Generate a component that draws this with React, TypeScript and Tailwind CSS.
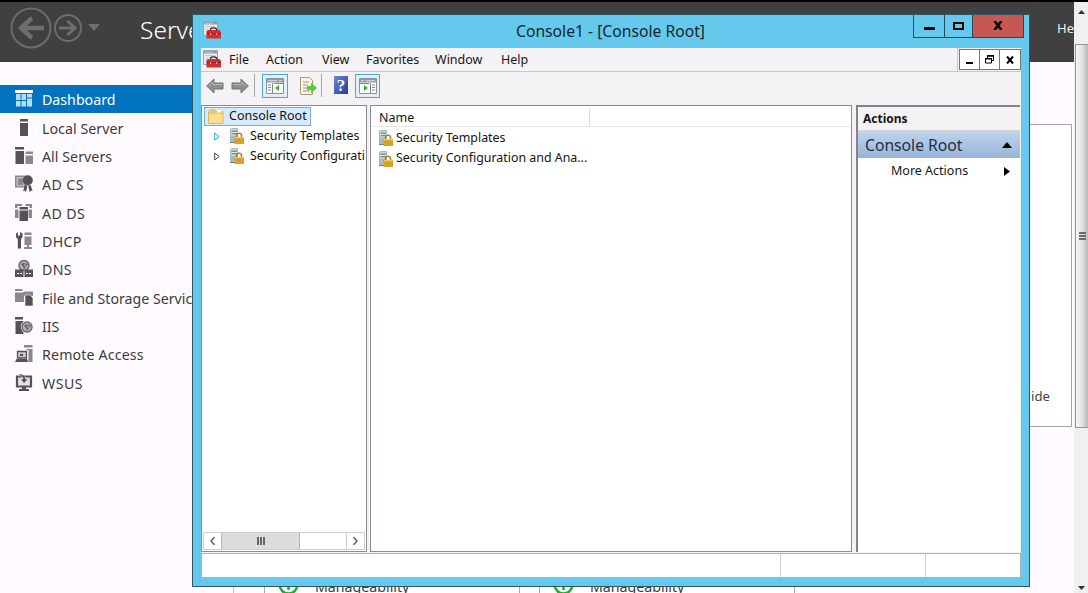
import type { ReactNode } from "react";

const Svg = ({ children, className = "size-[18px]", box = "0 0 18 18" }: { children: ReactNode; className?: string; box?: string }) => (
    <svg viewBox={box} className={`shrink-0 ${className}`} fill="none">
        {children}
    </svg>
);

const DARK = "#555257";
const MID = "#8b888d";

const Globe = ({ cx, cy, r }: { cx: number; cy: number; r: number }) => (
    <g>
        <circle cx={cx} cy={cy} r={r} fill="#b5b3b7" stroke="#6a676c" strokeWidth="1.4" />
        <path d={`M${cx - 3} ${cy - 1}l2-2 2 1-1 2 2 1-2 3-1-3zM${cx + 1} ${cy - 3}l3 2-2 2z`} fill="#6a676c" />
    </g>
);

const sidebar = [
    {
        label: "Dashboard",
        spacing: "tracking-normal",
        icon: <><path d="M0 0h18v3H0z" fill="#fff" /><path d="M1 4h4.500v6H1zM6.500 4H11v6H6.500zM12 4h5v3.500h-5zM1 11h4.500v5.500H1zM6.500 11H11v5.500H6.500zM12 8.500h5v8h-5z" fill="#b9dcf6" /></>,
    },
    {
        label: "Local Server",
        spacing: "tracking-[0.05px]",
        icon: <path d="M5 0h8v2.500H5zM5 4h8v13H5z" fill={DARK} />,
    },
    {
        label: "All Servers",
        spacing: "tracking-[0.05px]",
        icon: <><path d="M0 0h9v2.500H0zM.500 4H9v13H.500z" fill={DARK} /><path d="M10.500 4.500H18V7h-7.500zM10.500 8.500H18V17h-7.500z" fill={MID} /></>,
    },
    {
        label: "AD CS",
        spacing: "tracking-[0.4px]",
        icon: <><path d="M.7 1.200h9v10.500h-9z" fill="#bdbbc0" stroke={MID} strokeWidth="1.400" /><path d="M3 3.500h5V10H3z" fill={MID} /><circle cx="12.800" cy="5.200" r="5" fill={DARK} /><path d="M10 10l2.500.5-1.500 6.500-1.500-1.500-1.500.5zM15.600 10l-2.500.5 1.500 6.500 1.500-1.500 1.500.5z" fill={DARK} /></>,
    },
    {
        label: "AD DS",
        spacing: "tracking-[0.4px]",
        icon: <><path d="M0 0h7v2H2.500v2H0zM10.500 0H17v4h-2.500V2h-4zM0 5.500h3.500V14H0zM13.500 5.500H17V14h-3.500z" fill={MID} /><path d="M4.500 3h8.500v2.500H4.500zM4.500 6.500H13V17H4.500z" fill={DARK} /></>,
    },
    {
        label: "DHCP",
        spacing: "tracking-[0.3px]",
        icon: <><path d="M2.800 0v3.500h2.200V0L7.500 1.500v3.700L6 7v9.500H2.800V7L1 5.200V1.500z" fill={DARK} /><path d="M9.500.5h7V3h-7zM9.500 4.500h7V13h-7zM12 13h2v2h3v2h-8v-2h3z" fill={MID} /></>,
    },
    {
        label: "DNS",
        spacing: "tracking-[0.3px]",
        icon: <><Globe cx={9} cy={5.500} r={5} /><path d="M0 9.500h8.500V17H0zM9.500 9.500H18V17H9.500z" fill={DARK} /><path d="M2 13h2v1H2zM5 13h2v1H5zM11 13h2v1h-2zM14 13h2v1h-2z" fill="#fff" /></>,
    },
    {
        label: "File and Storage Services",
        spacing: "tracking-normal",
        icon: <><path d="M0 0h7.500v2H0zM0 3.500h9V13H0zM8.500 2.500H18V7H8.500z" fill={MID} /><path d="M10 6h5l3 3v8h-8z" fill={DARK} stroke="#fff" strokeWidth=".6" /></>,
    },
    {
        label: "IIS",
        spacing: "tracking-normal",
        icon: <><path d="M0 0h8v2.500H0zM.500 4h8v13h-8z" fill={DARK} /><circle cx="12" cy="10" r="6.200" fill="#fefaff" /><Globe cx={12} cy={10} r={5} /></>,
    },
    {
        label: "Remote Access",
        spacing: "tracking-[0.15px]",
        icon: <><path d="M9 0h8.500v2.500H9zM11.500 4h6v13h-4V5H11z" fill={MID} /><path d="M2.500 6.500h9V13h-9z" fill="#c9c7cb" stroke={DARK} strokeWidth="1.300" /><path d="M1.500 14h10.500l1.500 3H0z" fill={DARK} /><path d="M5 11V9h3v2z" fill={DARK} /></>,
    },
    {
        label: "WSUS",
        spacing: "tracking-[0.5px]",
        icon: <><path d="M2 2.500h14v10H2z" fill="#e4e1e5" stroke={DARK} strokeWidth="2.200" /><path d="M7 13h4v2h3v2H4v-2h3z" fill={DARK} /><path d="M4 0c5 0 6.500 2.500 6.500 5H13L9 9.500 5.500 5H8C8 3 6.500 1.500 4 1.500z" fill={DARK} stroke="#fefaff" strokeWidth=".5" /></>,
    },
];

const Toolbox = () => (
    <Svg>
        <path d="M.5.500h14v14H.5z" fill="#e9edee" stroke="#9aa5aa" />
        <path d="M1 1h13v2.500H1z" fill="#8f9ca1" />
        <path d="M2 2.200h8M2 5.500h10M2 8h3M2 10.500h2" stroke="#c3ccd0" />
        <path d="M7.500 9.500V7.800c1-1.200 5-1.200 6 0v1.700" stroke="#2b2527" strokeWidth="1.300" />
        <path d="M4.500 9h12L18 11v6.500H3.500V11z" fill="#d02f2d" />
        <path d="M3.500 12.500H18" stroke="#96201f" />
        <path d="M7 12h1.200v2H7zM13 12h1.200v2H13z" fill="#e9a698" />
    </Svg>
);

const ServerLock = () => (
    <Svg className="size-[16px]" box="0 0 16 16">
        <path d="M1 1l2-1h6v15H1z" fill="#a9b9c0" />
        <path d="M2 2h6M2 4.500h6M2 7h5" stroke="#e2eaec" />
        <path d="M3 3.200h5M3 5.700h5M1 14.500h6" stroke="#657984" strokeWidth=".9" />
        <path d="M7.500 10V7.500c0-3 5-3 5 0V10" stroke="#a8822d" strokeWidth="1.600" />
        <path d="M5.500 9H15v7H5.500z" fill="#d6a326" />
        <path d="M6 9.700h8.500" stroke="#f5d879" />
        <path d="M10 11.500V13" stroke="#b58a22" />
    </Svg>
);

const Folder = () => (
    <Svg className="size-[16px]" box="0 0 16 16">
        <path d="M.5 2.500L2 1h5l1 1.500h7v12H.5z" fill="#edc867" stroke="#dcb762" />
        <path d="M1 5h13.500v9H1z" fill="#f8df8f" />
        <path d="M9 1.500h4.500v2H9z" fill="#fff" />
    </Svg>
);

const Arrow = ({ flip = false }: { flip?: boolean }) => (
    <Svg className={flip ? "h-4 w-[18px] -scale-x-100" : "h-4 w-[18px]"} box="0 0 18 16">
        <path d="M.7 8L8 1v4h9v6H8v4z" fill="#8f8f8f" stroke="#727272" />
        <path d="M3 8l4-4v2.500h9" stroke="#b5b5b5" />
    </Svg>
);

const PaneIcon = ({ flip = false }: { flip?: boolean }) => (
    <Svg className={flip ? "h-[16px] w-[18px] -scale-x-100" : "h-[16px] w-[18px]"} box="0 1 18 16">
        <path d="M.5 1.500h17v15H.5z" fill="#fff" stroke="#8b9196" />
        <path d="M1 2h16v3.500H1z" fill="#929ba3" />
        <path d="M2 3.700h9M13 3.700h3" stroke="#dce1e5" />
        <path d="M6.500 6v10M2 8h3M2 10.500h3M2 13h3M8 6.500h9" stroke="#7f878f" />
        <path d="M13 8v6l-4-3z" fill="#3fae29" />
    </Svg>
);

const menu = [
    { label: "File", cell: "w-[37px]" },
    { label: "Action", cell: "w-[56px]" },
    { label: "View", cell: "w-[44px]" },
    { label: "Favorites", cell: "w-[69px]" },
    { label: "Window", cell: "w-[66px]" },
    { label: "Help", cell: "w-[40px]" },
];

const Sidebar = () => (
    <div className="w-[233px] shrink-0 pt-[22.700px]">
        {sidebar.map(({ label, icon, spacing }, i) => (
            <div
                key={label}
                className={`flex h-[28.350px] items-center gap-[9px] pl-[15px] text-[14.200px] whitespace-nowrap ${spacing} ${i === 0 ? "bg-[#0072c0] text-white" : "text-[#3d3a40]"}`}
            >
                <Svg className="mt-px size-[18px]">{icon}</Svg>
                <span className="mt-[2px]">{label}</span>
            </div>
        ))}
    </div>
);

const Tile = () => (
    <div className="flex h-full w-[256px] items-end gap-[16px] overflow-hidden border-x border-[#aaa6ab] bg-white pl-[13px]">
        <Svg className="mb-[-2px] size-[21px]" box="0 0 21 21">
            <circle cx="10.500" cy="10.500" r="9" stroke="#16b526" strokeWidth="2.500" />
            <path d="M10.500 16V6M6.500 10l4-4 4 4" stroke="#16b526" strokeWidth="2.500" />
        </Svg>
        <span className="mb-[-4px] text-[14.200px] leading-[20px] text-[#3d3a40]">Manageability</span>
    </div>
);

const ServerManager = () => (
    <div className="flex h-full w-full bg-[#fefaff]">
        <div className="flex min-w-0 flex-1 flex-col">
            <div className="flex h-[60px] shrink-0 justify-between bg-[#404040]">
                <div className="flex items-start pl-[10px]">
                    <Svg className="mt-[5px] size-[42px]" box="0 0 42 42">
                        <circle cx="21" cy="21" r="19.500" stroke="#6c6c6c" strokeWidth="2" />
                        <path d="M34 21H11M22 11L11 21l11 10" stroke="#6e6e6e" strokeWidth="4.500" />
                    </Svg>
                    <Svg className="mt-[11px] ml-[1px] size-[30px]" box="0 0 30 30">
                        <circle cx="15" cy="15" r="13" stroke="#6c6c6c" strokeWidth="2" />
                        <path d="M6 15h16M14.500 8l7.500 7-7.500 7" stroke="#6e6e6e" strokeWidth="3" />
                    </Svg>
                    <Svg className="mt-[22px] ml-[5px] h-[8px] w-[12px]" box="0 0 12 8">
                        <path d="M0 0h12L6 7z" fill="#6e6e6e" />
                    </Svg>
                    <span className="mt-[11px] ml-[40px] text-[24.500px] leading-[34px] font-light text-white">Server Manager</span>
                </div>
                <span className="mt-[16px] w-[17px] overflow-hidden text-[13px] leading-[20px] text-[#eee]">Help</span>
            </div>
            <div className="flex min-h-0 flex-1">
                <Sidebar />
                <div className="flex flex-1 flex-col border-l border-[#c4c0c6] pt-[62px]">
                    <div className="mr-[2px] flex h-[303px] items-end justify-end border border-[#aaa0a8] bg-white pr-[21px] pb-[20px]">
                        <span className="text-[13.200px] leading-[20px] text-[#444]">Hide</span>
                    </div>
                    <div className="flex flex-1 items-end gap-[19px] pl-[30px]">
                        <div className="h-[80px]"><Tile /></div>
                        <div className="h-[80px]"><Tile /></div>
                    </div>
                </div>
            </div>
        </div>
        <div className="flex w-[14px] shrink-0 flex-col items-center bg-[#f0f0f0]">
            <Svg className="mt-[8px] h-[4px] w-[7px]" box="0 0 7 4"><path d="M0 4l3.500-4L7 4z" fill="#333" /></Svg>
            <div className="mt-[30px] ml-px flex h-[384px] w-[13px] items-center justify-center border border-r-0 border-[#949297] bg-linear-to-r from-[#f7f7f8] via-[#e3e3e5] to-[#b9b9bd]">
                <Svg className="h-[9px] w-[7px]" box="0 0 7 9"><path d="M0 1h7M0 4h7M0 7h7" stroke="#444" strokeWidth="1.500" /></Svg>
            </div>
            <Svg className="mt-auto mb-[3px] h-[4px] w-[7px]" box="0 0 7 4"><path d="M0 0l3.500 4L7 0z" fill="#333" /></Svg>
        </div>
    </div>
);

const TitleBar = () => (
    <div className="flex h-[33px] shrink-0 items-start">
        <div className="mt-[6px] ml-[10px] w-[112px]"><Toolbox /></div>
        <div className="mt-[4px] flex-1 pl-[201px] text-[15.700px] leading-[24px] whitespace-nowrap text-[#14262d]">Console1 - [Console Root]</div>
        <div className="mr-[5px] flex h-[23px] border border-t-0 border-[#244b59]">
            <div className="flex w-[31px] justify-center border-r border-[#244b59]"><div className="mt-[12px] h-[3px] w-[11px] bg-black" /></div>
            <div className="flex w-[28px] justify-center border-r border-[#244b59]"><div className="mt-[7px] h-[8px] w-[11px] border-2 border-black" /></div>
            <div className="flex w-[50px] justify-center bg-[#c65853]">
                <Svg className="mt-[6px] h-[9px] w-[10px]" box="0 0 10 9"><path d="M1.500 0l7 9M8.500 0l-7 9" stroke="#000" strokeWidth="2.500" /></Svg>
            </div>
        </div>
    </div>
);

const MenuBar = () => (
    <div className="flex h-[24px] shrink-0 border-b border-[#c9c6ca] bg-[#f5f2f6] text-[12.500px]">
        <div className="mt-[2px] ml-[2px] w-[26px]"><Toolbox /></div>
        <div className="flex flex-1 leading-[23px]">
            {menu.map(({ label, cell }) => <span key={label} className={`${cell} shrink-0 whitespace-nowrap`}>{label}</span>)}
        </div>
        <div className="flex h-[24px] items-start border-l border-[#c9c6ca] pt-px pl-px">
            <div className="flex h-[21px] w-[21px] items-center justify-center border border-[#77747a] bg-white"><div className="mt-[7px] h-[2px] w-[7px] bg-black" /></div>
            <div className="flex h-[21px] w-[20px] items-center justify-center border border-l-0 border-[#77747a] bg-white">
                <Svg className="h-[9px] w-[9px]" box="0 0 9 9"><path d="M2.500 3V1H8.500V5.500H7M.5 3.500h6v4.500h-6z" stroke="#000" /><path d="M2 .7h7M0 3.700h7" stroke="#000" strokeWidth="1.400" /></Svg>
            </div>
            <div className="flex h-[21px] w-[21px] items-center justify-center border border-l-0 border-[#77747a] bg-white">
                <Svg className="h-[8px] w-[8px]" box="0 0 8 8"><path d="M1 .5l6 7M7 .5l-6 7" stroke="#000" strokeWidth="2" /></Svg>
            </div>
        </div>
    </div>
);

const Toolbar = () => (
    <div className="flex h-[33px] shrink-0 items-start bg-[#f5f2f6] pl-[5px]">
        <div className="mt-[6px]"><Arrow /></div>
        <div className="mt-[6px] ml-[7px]"><Arrow flip /></div>
        <div className="mt-[2px] ml-[5px] h-[23px] w-px bg-[#aaa6ac]" />
        <div className="mt-[2px] ml-[7px] flex h-[24px] w-[26px] items-center justify-center border border-[#4ba8d8] bg-[#e0f1fa]"><PaneIcon /></div>
        <Svg className="mt-[5px] ml-[11px] size-[18px]">
            <path d="M1.500.5h9l3 3v14h-12z" fill="#fff9df" stroke="#a99a77" />
            <path d="M4 5h6M4 8h5M4 11h5M4 14h7" stroke="#8a9191" />
            <path d="M8 9h4V5.500l6 5.500-6 5.500V13H8z" fill="#56cc35" />
        </Svg>
        <div className="mt-[2px] ml-[4px] h-[23px] w-px bg-[#aaa6ac]" />
        <div className="mt-[4px] ml-[12px] flex h-[18px] w-[14px] items-center justify-center bg-linear-to-br from-[#7185cf] to-[#263b9f] font-['Liberation_Serif'] text-[17px] leading-none font-bold text-white">?</div>
        <div className="mt-[2px] ml-[7px] flex h-[24px] w-[25px] items-center justify-center border border-[#4ba8d8] bg-[#e0f1fa]"><PaneIcon flip /></div>
    </div>
);

const TreeRow = ({ label, active = false }: { label: string; active?: boolean }) => (
    <div className="flex h-[20px] items-center pl-[12px]">
        <Svg className="h-[9px] w-[6px]" box="0 0 6 9"><path d="M.7 1v7L5.200 4.500z" stroke={active ? "#28a9d5" : "#444"} /></Svg>
        <div className="ml-[9px]"><ServerLock /></div>
        <span className="ml-[5px] text-[12.400px]">{label}</span>
    </div>
);

const Tree = () => (
    <div className="flex w-[166px] shrink-0 flex-col overflow-hidden border border-[#8e8992] bg-white whitespace-nowrap">
        <div className="mt-px ml-[2px] flex h-[19px] w-[107px] items-center border border-[#77aed8] bg-[#d5eafb] pl-[3px]">
            <Folder />
            <span className="ml-[5px]">Console Root</span>
        </div>
        <TreeRow label="Security Templates" active />
        <TreeRow label="Security Configurati" />
        <div className="mt-auto mr-px mb-px ml-px flex h-[18px] border border-[#d0cdd1]">
            <div className="flex w-[17px] items-center justify-center"><Svg className="h-[8px] w-[5px]" box="0 0 5 8"><path d="M4.500 0L1 4l3.500 4" stroke="#555" strokeWidth="1.300" /></Svg></div>
            <div className="flex w-[79px] items-center justify-center gap-px border-x border-[#b6b4b7] bg-[#dcdcdc]">
                <div className="h-[8px] w-[2px] bg-[#67656a]" /><div className="h-[8px] w-[2px] bg-[#67656a]" /><div className="h-[8px] w-[2px] bg-[#67656a]" />
            </div>
            <div className="ml-auto flex w-[18px] items-center justify-center border-l border-[#d0cdd1]"><Svg className="h-[8px] w-[5px]" box="0 0 5 8"><path d="M.5 0L4 4 .5 8" stroke="#555" strokeWidth="1.300" /></Svg></div>
        </div>
    </div>
);

const ListPane = () => (
    <div className="ml-[3px] w-[482px] shrink-0 border border-[#8e8992] bg-white px-px pt-px">
        <div className="mb-px flex h-[20px] border-b border-[#e8e6e9] pl-[7px] leading-[21px]"><span className="w-[211px] border-r border-[#e0dde1]">Name</span></div>
        {["Security Templates", "Security Configuration and Ana..."].map((name) => (
            <div key={name} className="flex h-[20.500px] items-center gap-[2px] pl-[6px] text-[12.400px] whitespace-nowrap"><ServerLock /><span>{name}</span></div>
        ))}
    </div>
);

const Actions = () => (
    <div className="mr-px ml-[4px] flex-1 border-t-2 border-l-2 border-[#858188] bg-white">
        <div className="h-[24px] border-b border-[#d8d5da] bg-[#f5f2f6] pl-[5px] text-[12px] leading-[23px] font-bold">Actions</div>
        <div className="flex h-[27px] items-center justify-between bg-linear-to-b from-[#bfd5ee] to-[#98b4d8] pt-[2px] pr-[8px] pl-[7px] text-[15.700px] text-[#1e3047]">
            Console Root
            <Svg className="mb-[2px] h-[6px] w-[10px]" box="0 0 10 6"><path d="M0 6l5-6 5 6z" fill="#000" /></Svg>
        </div>
        <div className="flex h-[27px] items-center justify-between pr-[10px] pl-[33px]">
            More Actions
            <Svg className="h-[9px] w-[6px]" box="0 0 6 9"><path d="M0 0l6 4.500L0 9z" fill="#000" /></Svg>
        </div>
    </div>
);

const ConsoleWindow = () => (
    <div className="absolute top-[14px] left-[192px] flex h-[573px] w-[838px] flex-col border border-[#315764] bg-[#64c9ed] text-[12.500px] text-[#151515]">
        <TitleBar />
        <div className="mx-[8px] mb-[8px] flex min-h-0 flex-1 flex-col bg-[#f5f2f6]">
            <MenuBar />
            <Toolbar />
            <div className="flex min-h-0 flex-1"><Tree /><ListPane /><Actions /></div>
            <div className="mt-px flex h-[25px] shrink-0 border border-[#b5b1b6] bg-white">
                <div className="w-[579px] border-r border-[#d3d0d4]" />
                <div className="w-[145px] border-r border-[#d3d0d4]" />
            </div>
        </div>
    </div>
);

const App = () => {
    return (
        <div className="relative h-[593px] w-[1088px] overflow-hidden border-t-2 border-black font-['Noto_Sans','Open_Sans',sans-serif]">
            <ServerManager />
            <div className="absolute inset-x-0 -top-[2px] h-[593px]"><ConsoleWindow /></div>
        </div>
    );
};

export default App;
